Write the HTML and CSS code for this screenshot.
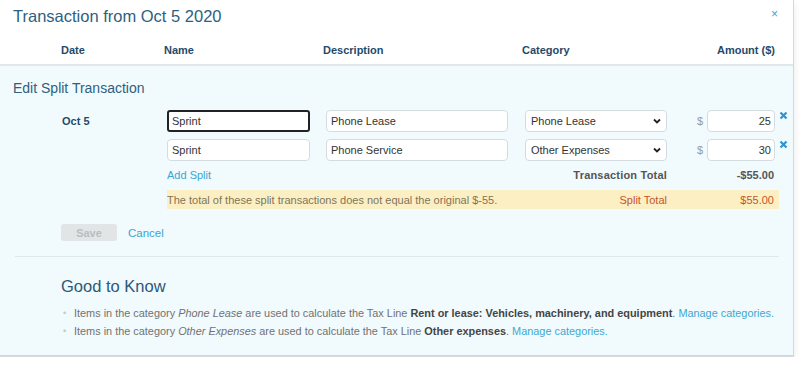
FILE: index.html
```html
<!DOCTYPE html>
<html lang="en">
<head>
  <meta charset="UTF-8">
  <title>Transaction from Oct 5 2020</title>
  <link rel="stylesheet" href="styles.css">
</head>
<body>
  <div class="modal">
    <div class="modal-head">
      <div class="title-bar">
        <h2>Transaction from Oct 5 2020</h2>
        <span class="close">&times;</span>
      </div>
      <div class="grid cols">
        <span>Date</span>
        <span>Name</span>
        <span>Description</span>
        <span>Category</span>
        <span class="amount-head">Amount ($)</span>
      </div>
    </div>

    <div class="modal-body">
      <h3>Edit Split Transaction</h3>

      <div class="grid row">
        <span class="date">Oct 5</span>
        <input class="txt name focused" type="text" value="Sprint">
        <input class="txt desc" type="text" value="Phone Lease">
        <div class="select-wrap">
          <select class="sel"><option>Phone Lease</option></select>
          <svg class="chev" width="8" height="6" viewBox="0 0 8 6"><path d="M1 1.5 L4 4.5 L7 1.5" fill="none" stroke="#222" stroke-width="1.8"/></svg>
        </div>
        <span class="dollar">$</span>
        <input class="txt amt" type="text" value="25">
        <span class="del"><svg width="9" height="9" viewBox="0 0 9 9"><path d="M1.5 1.5 L7.5 7.5 M7.5 1.5 L1.5 7.5" stroke="#2e93d0" stroke-width="2.2"/></svg></span>
      </div>

      <div class="grid row">
        <span class="date"></span>
        <input class="txt name" type="text" value="Sprint">
        <input class="txt desc" type="text" value="Phone Service">
        <div class="select-wrap">
          <select class="sel"><option>Other Expenses</option></select>
          <svg class="chev" width="8" height="6" viewBox="0 0 8 6"><path d="M1 1.5 L4 4.5 L7 1.5" fill="none" stroke="#222" stroke-width="1.8"/></svg>
        </div>
        <span class="dollar">$</span>
        <input class="txt amt" type="text" value="30">
        <span class="del"><svg width="9" height="9" viewBox="0 0 9 9"><path d="M1.5 1.5 L7.5 7.5 M7.5 1.5 L1.5 7.5" stroke="#2e93d0" stroke-width="2.2"/></svg></span>
      </div>

      <div class="grid totals">
        <span></span>
        <a class="add-split">Add Split</a>
        <span class="total-label">Transaction Total</span>
        <span class="total-value">-$55.00</span>
      </div>

      <div class="warning">
        <span>The total of these split transactions does not equal the original $-55.</span>
        <span class="split-label">Split Total</span>
        <span class="split-value">$55.00</span>
        <span></span>
      </div>

      <div class="actions">
        <button class="save" disabled>Save</button>
        <a class="cancel">Cancel</a>
      </div>

      <hr class="sep">

      <div class="know">
        <h3>Good to Know</h3>
        <ul>
          <li>Items in the category <em>Phone Lease</em> are used to calculate the Tax Line <b>Rent or lease: Vehicles, machinery, and equipment</b>. <a>Manage categories.</a></li>
          <li>Items in the category <em>Other Expenses</em> are used to calculate the Tax Line <b>Other expenses</b>. <a>Manage categories.</a></li>
        </ul>
      </div>
    </div>
  </div>
</body>
</html>
```

FILE: styles.css
```css
*, *::before, *::after {
    box-sizing: border-box;
}
body {
    margin: 0;
    background: #fff;
    font-family: "Liberation Sans", Arial, sans-serif;
    color: #333;
}
.modal {
    width: 794px;
    border-right: 1px solid #d6d9db;
    border-bottom: 2px solid #d6d9db;
    box-shadow: 0 4px 8px rgba(0, 0, 0, 0.08);
}
.modal-head {
    background: #fff;
    padding-bottom: 7px;
    border-bottom: 2px solid #e3e7e9;
}
.title-bar {
    display: flex;
    justify-content: space-between;
    align-items: flex-start;
    padding: 6px 15px 0 13px;
}
.title-bar h2 {
    margin: 0;
    font-size: 16.5px;
    line-height: 20px;
    font-weight: normal;
    color: #2e5f80;
}
.close {
    font-size: 12px;
    line-height: 12px;
    margin-top: 2px;
    color: #4b9ccc;
}
.grid {
    display: grid;
    grid-template-columns: 106px 159px 199px 142px 40px 68px 19px;
    padding-left: 61px;
    align-items: center;
}
.cols {
    margin-top: 17px;
    font-size: 11px;
    line-height: 14px;
    font-weight: bold;
    color: #1f4b6a;
}
.cols span:nth-child(2),
.cols span:nth-child(3),
.cols span:nth-child(4) {
    margin-left: -3px;
}
.amount-head {
    grid-column: 5 / 7;
    text-align: right;
}
.modal-body {
    background: #f1fafd;
    padding: 13px 0 15px;
}
.modal-body > h3 {
    margin: 0 0 13px 13px;
    font-size: 14px;
    line-height: 18px;
    font-weight: normal;
    color: #2e5f80;
}
.row {
    height: 22px;
    margin-bottom: 7px;
}
.date {
    font-size: 11px;
    font-weight: bold;
    color: #1f4b6a;
    padding-left: 1px;
}
.txt {
    height: 22px;
    padding: 0 4px;
    border: 1px solid #d3dde1;
    border-radius: 4px;
    background: #fff;
    font-family: inherit;
    font-size: 11px;
    color: #333;
    outline: none;
}
.txt.focused {
    border: 2px solid #222;
    border-radius: 3px;
    padding-left: 3px;
}
.name {
    width: 143px;
}
.desc {
    width: 182px;
}
.select-wrap {
    position: relative;
    height: 22px;
}
.sel {
    width: 142px;
    height: 22px;
    padding: 0 5px;
    border: 1px solid #d3dde1;
    border-radius: 4px;
    background: #fff;
    font-family: inherit;
    font-size: 11px;
    color: #333;
    appearance: none;
    -webkit-appearance: none;
}
.chev {
    position: absolute;
    right: 6px;
    top: 8px;
}
.dollar {
    font-size: 11px;
    color: #999;
    text-align: right;
    padding-right: 4px;
}
.amt {
    width: 68px;
    text-align: right;
    padding-right: 3px;
}
.del {
    padding-left: 4px;
    align-self: start;
    line-height: 0;
    margin-top: 1px;
}
.totals {
    margin-top: 1px;
    font-size: 11px;
    line-height: 14px;
}
.add-split {
    grid-column: 2 / 4;
    color: #3ba5d0;
}
.total-label {
    text-align: right;
    font-weight: bold;
    color: #555;
    letter-spacing: 0.2px;
}
.total-value {
    grid-column: 5 / 7;
    text-align: right;
    padding-right: 1px;
    font-weight: bold;
    color: #555;
}
.warning {
    display: grid;
    grid-template-columns: 358px 142px 108px 4px;
    align-items: center;
    margin: 8px 0 0 167px;
    width: 612px;
    height: 19px;
    background: #fdefc4;
    font-size: 11px;
    color: #7d7658;
}
.split-label {
    text-align: right;
    color: #c4552a;
}
.split-value {
    text-align: right;
    padding-right: 1px;
    color: #c4552a;
}
.actions {
    display: flex;
    align-items: center;
    gap: 11px;
    margin: 15px 0 0 61px;
}
.save {
    width: 56px;
    height: 17px;
    padding: 0;
    border: none;
    border-radius: 3px;
    background: #e2e5e6;
    font-family: inherit;
    font-size: 11px;
    font-weight: bold;
    color: #b9bdbf;
}
.cancel {
    font-size: 11.5px;
    color: #3ba5d0;
}
.sep {
    margin: 15px 14px 0 15px;
    border: none;
    border-top: 1px solid #dde9ed;
}
.know {
    padding-left: 61px;
}
.know h3 {
    margin: 19px 0 8px;
    font-size: 16.5px;
    line-height: 20px;
    font-weight: normal;
    color: #2b5878;
}
.know ul {
    margin: 0;
    padding: 0;
    list-style: none;
}
.know li {
    font-size: 10.9px;
    line-height: 18px;
    color: #727272;
    padding-left: 13px;
    position: relative;
}
.know li::before {
    content: "\2022";
    position: absolute;
    left: 2px;
    color: #c3c6c8;
    font-size: 9px;
}
.know b {
    color: #454545;
}
.know a {
    color: #3ea8d1;
}
```
